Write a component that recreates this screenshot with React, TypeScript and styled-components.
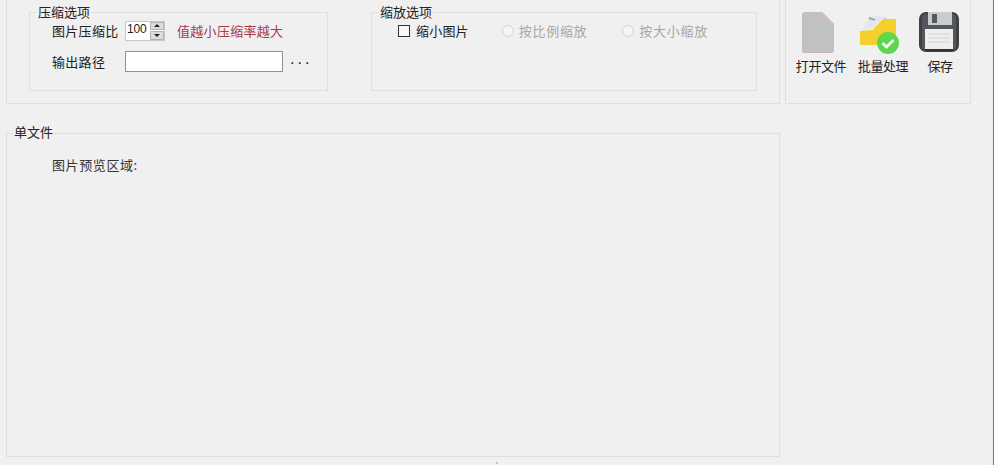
import React from "react";
import styled, { createGlobalStyle } from "styled-components";

const GlobalStyle = createGlobalStyle`
  html, body {
    margin: 0;
    padding: 0;
    background: #f0f0f0;
    overflow: hidden;
  }
  body {
    font-family: "Noto Sans CJK SC", "Liberation Sans", sans-serif;
    font-size: 13px;
    color: #222;
  }
`;

const Page = styled.div`
  position: relative;
  width: 994px;
  height: 465px;
  box-sizing: border-box;
  padding-left: 6px;
  background: #f0f0f0;
  border-right: 1px solid #5f7f96;
  box-shadow: inset -2px 0 0 #e6f0f5;
  overflow: hidden;

  /* tiny grip mark under the lower group */
  &::after {
    content: "";
    position: absolute;
    left: 496px;
    top: 462px;
    width: 2px;
    height: 2px;
    background: #c4c4c4;
  }
`;

const TopRow = styled.div`
  display: flex;
  gap: 5px;
`;

const Panel = styled.div<{ $width: number }>`
  width: ${(p) => p.$width}px;
  height: 104px;
  box-sizing: border-box;
  border: 1px solid #dfdfdf;
  border-top: none;
`;

const OptionsPanel = styled(Panel)`
  display: flex;
  gap: 43px;
  padding-left: 22px;
`;

const ToolPanel = styled(Panel)`
  display: flex;
  gap: 10px;
  padding: 12px 0 0 9px;
`;

const Group = styled.fieldset<{ $width: number; $height: number }>`
  width: ${(p) => p.$width}px;
  height: ${(p) => p.$height}px;
  box-sizing: border-box;
  margin: 0;
  padding: 0;
  border: 1px solid #dfdfdf;
  min-width: 0;
`;

const GroupTitle = styled.legend<{ $indent: number }>`
  margin-left: ${(p) => p.$indent}px;
  padding: 0 1px;
  font-size: 13px;
  line-height: 15px;
  height: 17px;
  color: #222;
`;

const CompressGroup = styled(Group)`
  margin-top: 4px;
`;

const Rows = styled.div`
  display: flex;
  flex-direction: column;
  gap: 10px;
  margin-top: -1px;
  padding-left: 22px;
`;

const Row = styled.div`
  display: flex;
  align-items: center;
  height: 21px;
`;

const FieldLabel = styled.span`
  width: 73px;
  letter-spacing: 0.3px;
  white-space: nowrap;
`;

const Spin = styled.div`
  width: 40px;
  height: 20px;
  box-sizing: border-box;
  display: flex;
  justify-content: space-between;
  background: #fff;
  border: 1px solid #c8c8c8;
`;

const SpinValue = styled.span`
  font-family: "Liberation Sans", sans-serif;
  font-size: 12px;
  line-height: 15px;
  padding-left: 1px;
  letter-spacing: -0.2px;
  color: #222;
`;

const SpinArrows = styled.div`
  width: 14px;
  display: flex;
  flex-direction: column;
  gap: 1px;
  background: #fff;
`;

const SpinArrow = styled.div<{ $up?: boolean }>`
  flex: 1;
  display: flex;
  align-items: center;
  justify-content: center;
  background: #dcdcdc;
  border: 1px solid #b4b4b4;
  &::before {
    content: "";
    border-left: 3px solid transparent;
    border-right: 3px solid transparent;
    ${(p) => (p.$up ? "border-bottom: 3px solid #222;" : "border-top: 3px solid #222;")}
  }
`;

const Hint = styled.span`
  margin-left: 12px;
  color: #a83a44;
  letter-spacing: 0.3px;
  white-space: nowrap;
`;

const PathInput = styled.input`
  width: 158px;
  height: 21px;
  box-sizing: border-box;
  margin: 0;
  padding: 0 2px;
  border: 1px solid #8f8f8f;
  background: #fff;
  outline: none;
`;

const Dots = styled.span`
  margin-left: 7px;
  padding-bottom: 5px;
  font-family: "Liberation Sans", sans-serif;
  font-size: 16px;
  letter-spacing: 3px;
  color: #222;
`;

const ScaleRow = styled.div`
  display: flex;
  align-items: center;
  height: 21px;
  margin-top: -1px;
  padding-left: 26px;
`;

const CheckBox = styled.span`
  width: 12px;
  height: 12px;
  box-sizing: border-box;
  border: 1px solid #333;
  background: #f8f8f8;
  flex: none;
`;

const Radio = styled.span<{ $left: number }>`
  width: 12px;
  height: 12px;
  box-sizing: border-box;
  margin-left: ${(p) => p.$left}px;
  border: 1px solid #d0d0d0;
  border-radius: 50%;
  background: #f6f6f6;
  flex: none;
`;

const OptionText = styled.span<{ $disabled?: boolean; $left: number }>`
  margin-left: ${(p) => p.$left}px;
  color: ${(p) => (p.$disabled ? "#a9a5a5" : "#222")};
  letter-spacing: ${(p) => (p.$disabled ? "0.7px" : "0.2px")};
  white-space: nowrap;
`;

const ToolButton = styled.div<{ $width: number }>`
  width: ${(p) => p.$width}px;
  display: flex;
  flex-direction: column;
  align-items: center;
`;

const ToolIcon = styled.svg`
  width: 42px;
  height: 42px;
  display: block;
  flex: none;
  overflow: visible;
`;

const ToolText = styled.span`
  margin-top: 3px;
  line-height: 18px;
  letter-spacing: -0.4px;
  white-space: nowrap;
  color: #222;
`;

const FileGroup = styled(Group)`
  margin-top: 21px;
  padding: 14px 0 0 45px;
`;

const FileTitle = styled(GroupTitle)`
  margin-left: -39px;
  line-height: 13px;
`;

const PreviewLabel = styled.div`
  line-height: 18px;
  letter-spacing: 0.6px;
  color: #333;
`;

const FileIcon = () => (
  <ToolIcon viewBox="0 0 42 42">
    <path d="M5 0h17l12 12v26a3 3 0 0 1-3 3H5a3 3 0 0 1-3-3V3a3 3 0 0 1 3-3z" fill="#c0c2c2" />
    <path d="M22 0l12 12H25a3 3 0 0 1-3-3z" fill="#cdbfbf" />
    <path d="M2.500 38.500a3 3 0 0 0 2.500 2h26a3 3 0 0 0 2.500-2" fill="none" stroke="#cdb6b6" />
  </ToolIcon>
);

const BatchIcon = () => (
  <ToolIcon viewBox="2 0 42 42">
    <path d="M2 18L10 3l17 2 6 10z" fill="#e4e8ec" />
    <path d="M9 6l6 2M24 7l6 3" stroke="#8b98a6" strokeWidth="1.500" />
    <path d="M0 19l13-1 10-11h13v26H1a1 1 0 0 1-1-1z" fill="#f5cf2b" />
    <circle cx="28" cy="31" r="11" fill="#5fd650" />
    <path d="M22.500 31l4 4 7-7" fill="none" stroke="#f4f8f2" strokeWidth="3" />
  </ToolIcon>
);

const SaveIcon = () => (
  <ToolIcon viewBox="0 0 42 42">
    <rect x="0" y="0" width="40" height="40" rx="7" fill="#3f4044" />
    <rect x="3" y="2" width="34" height="36" rx="4" fill="#55565b" />
    <rect x="9" y="0" width="24" height="13" fill="#c9ccce" />
    <rect x="13" y="2" width="5" height="9" fill="#55575b" />
    <rect x="6" y="17" width="28" height="21" fill="#eeeeee" />
    <path d="M9 22h22M9 26h22M9 30h22" stroke="#d2d2d2" strokeWidth="1" />
    <rect x="6" y="37" width="28" height="1.500" fill="#2e2f33" />
  </ToolIcon>
);

const App = () => {
  return (
    <Page>
      <GlobalStyle />
      <TopRow>
        <OptionsPanel $width={774}>
          <CompressGroup $width={299} $height={87}>
            <GroupTitle $indent={7}>压缩选项</GroupTitle>
            <Rows>
              <Row>
                <FieldLabel>图片压缩比</FieldLabel>
                <Spin>
                  <SpinValue>100</SpinValue>
                  <SpinArrows>
                    <SpinArrow $up />
                    <SpinArrow />
                  </SpinArrows>
                </Spin>
                <Hint>值越小压缩率越大</Hint>
              </Row>
              <Row>
                <FieldLabel>输出路径</FieldLabel>
                <PathInput readOnly />
                <Dots>...</Dots>
              </Row>
            </Rows>
          </CompressGroup>
          <CompressGroup $width={386} $height={87}>
            <GroupTitle $indent={7}>缩放选项</GroupTitle>
            <ScaleRow>
              <CheckBox />
              <OptionText $left={6}>缩小图片</OptionText>
              <Radio $left={33} />
              <OptionText $disabled $left={5}>按比例缩放</OptionText>
              <Radio $left={35} />
              <OptionText $disabled $left={5}>按大小缩放</OptionText>
            </ScaleRow>
          </CompressGroup>
        </OptionsPanel>
        <ToolPanel $width={186}>
          <ToolButton $width={52}>
            <FileIcon />
            <ToolText>打开文件</ToolText>
          </ToolButton>
          <ToolButton $width={52}>
            <BatchIcon />
            <ToolText>批量处理</ToolText>
          </ToolButton>
          <ToolButton $width={42}>
            <SaveIcon />
            <ToolText>保存</ToolText>
          </ToolButton>
        </ToolPanel>
      </TopRow>
      <FileGroup $width={774} $height={332}>
        <FileTitle $indent={0}>单文件</FileTitle>
        <PreviewLabel>图片预览区域:</PreviewLabel>
      </FileGroup>
    </Page>
  );
};

export default App;
